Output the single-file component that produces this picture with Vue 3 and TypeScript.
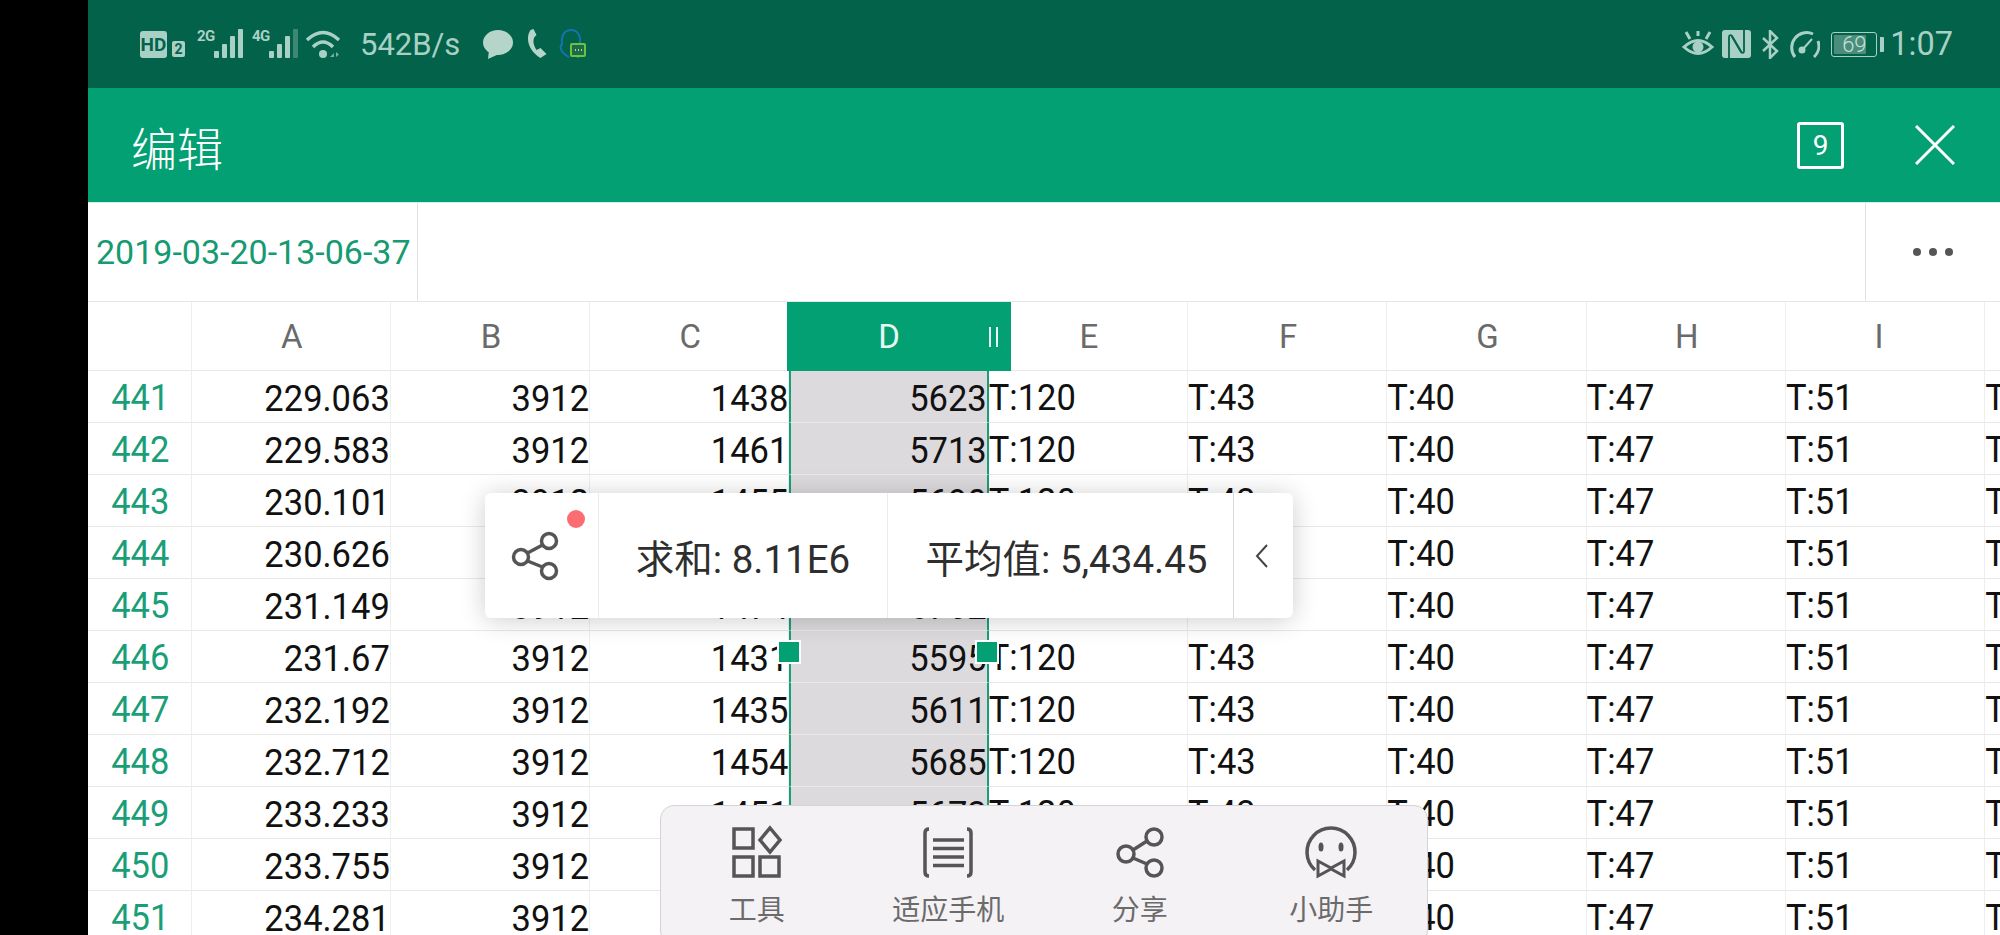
<script setup lang="ts">
interface Row { n: number; a: string; c: string; d: string }
const rows: Row[] = [
  { n: 441, a: '229.063', c: '1438', d: '5623' },
  { n: 442, a: '229.583', c: '1461', d: '5713' },
  { n: 443, a: '230.101', c: '1455', d: '5690' },
  { n: 444, a: '230.626', c: '1462', d: '5717' },
  { n: 445, a: '231.149', c: '1474', d: '5762' },
  { n: 446, a: '231.67', c: '1431', d: '5595' },
  { n: 447, a: '232.192', c: '1435', d: '5611' },
  { n: 448, a: '232.712', c: '1454', d: '5685' },
  { n: 449, a: '233.233', c: '1451', d: '5673' },
  { n: 450, a: '233.755', c: '1449', d: '5665' },
  { n: 451, a: '234.281', c: '1452', d: '5677' }
]
const heads: string[] = ['A', 'B', 'C', 'D', 'E', 'F', 'G', 'H', 'I', '']
const tail: string[] = ['T:120', 'T:43', 'T:40', 'T:47', 'T:51', 'T']
</script>

<template>
  <div class="screen">
    <div class="side"></div>
    <div class="main">
      <header class="status">
        <div class="st-left">
          <div class="hd">HD</div>
          <div class="sim">2</div>
          <div class="sig">
            <span class="sig-t">2G</span>
            <svg width="32" height="30" viewBox="0 0 32 30" fill="#a9d0c4"><rect x="1" y="22" width="5" height="7" rx="1"/><rect x="9" y="15" width="5" height="14" rx="1"/><rect x="17" y="7" width="5" height="22" rx="1"/><rect x="25" y="0" width="5" height="29" rx="1"/></svg>
          </div>
          <div class="sig sig2">
            <span class="sig-t">4G</span>
            <svg width="32" height="30" viewBox="0 0 32 30" fill="#a9d0c4"><rect x="1" y="22" width="5" height="7" rx="1"/><rect x="9" y="15" width="5" height="14" rx="1"/><rect x="17" y="7" width="5" height="22" rx="1"/><rect x="25" y="0" width="5" height="29" rx="1" opacity=".35"/></svg>
          </div>
          <svg class="wifi" width="36" height="28" viewBox="0 0 36 28" fill="none" stroke="#a9d0c4" stroke-width="3.500"><path d="M1 10Q17-5 33 10"/><path d="M7 17Q17 7 27 17"/><circle cx="17" cy="24" r="4" fill="#a9d0c4" stroke="none"/><path d="M24 27l4-4v4zM30 22l3 2.500-3 2.500z" fill="#a9d0c4" stroke="none" opacity=".7"/></svg>
          <span class="speed">542B/s</span>
          <svg class="bubble" width="30" height="29" viewBox="0 0 30 29" fill="#b5d5cb"><ellipse cx="15" cy="12.500" rx="15" ry="12.500"/><path d="M6 20L5 29L16 24z"/></svg>
          <svg class="phone" width="23" height="30" viewBox="0 0 22 30" fill="#b5d5cb"><path d="M5 1C0 8 2 21 15 29L21 25L15 19L11 21C8 16 7 12 9 8L11 6L8 0z"/></svg>
          <svg class="qq" width="28" height="30" viewBox="0 0 28 30" fill="none"><path d="M11 28C3 24 1 18 4 15C3 6 7 1 13 1C19 1 23 6 22 14" stroke="#1474b0" stroke-width="2"/><rect x="13" y="15" width="14" height="12" rx="1" stroke="#6cc242" stroke-width="2" fill="#1d6a48"/><path d="M17 21h1M20 21h1M23 21h1" stroke="#a9e08a" stroke-width="2"/><path d="M18 27l2 2 2-2" fill="#6cc242"/></svg>
        </div>
        <div class="st-right">
          <svg class="eye" width="32" height="26" viewBox="0 0 32 26" fill="none" stroke="#a9d0c4" stroke-width="3"><path d="M2 16Q16 3 30 16Q16 29 2 16z"/><circle cx="16" cy="16" r="5.500" fill="#a9d0c4" stroke="none"/><path d="M4 1l4 7M28 1l-4 7M16 0v5"/></svg>
          <svg class="nfc" width="29" height="28" viewBox="0 0 29 28"><rect width="29" height="28" rx="3" fill="#a9d0c4"/><path d="M7 28V7Q7 4 10 6L20 23M22 0V21Q22 24 19 22L9 5" fill="none" stroke="#03624a" stroke-width="1.800"/></svg>
          <svg class="bt" width="18" height="29" viewBox="0 0 18 29" fill="none" stroke="#a9d0c4" stroke-width="2.500"><path d="M2 8L16 21L9 28V1L16 8L2 21"/></svg>
          <svg class="gauge" width="32" height="28" viewBox="0 0 32 28" fill="none" stroke="#a9d0c4" stroke-width="3"><path d="M7 27A15 15 0 0 1 25 4"/><path d="M30 11A15 15 0 0 1 26 27"/><path d="M15 19L24 9" stroke-width="2"/><circle cx="14" cy="20" r="3.500" fill="#a9d0c4" stroke="none"/></svg>
          <div class="batt"><div class="batt-fill"></div><span class="batt-t">69</span></div>
          <div class="nub"></div>
          <span class="time">1:07</span>
        </div>
      </header>

      <div class="toolbar">
        <span class="title">编辑</span>
        <div class="count">9</div>
        <svg class="close" width="40" height="40" viewBox="0 0 40 40" stroke="#fff" stroke-width="3"><path d="M1 1L39 39M39 1L1 39"/></svg>
      </div>

      <div class="formula">
        <div class="name">2019-03-20-13-06-37</div>
        <div class="fx"></div>
        <div class="more"><i></i><i></i><i></i></div>
      </div>

      <div class="sheet">
        <div class="grid">
          <div class="h corner"></div>
          <div v-for="(h, i) in heads" :key="'h' + i" class="h" :class="{ hsel: h === 'D', hi: h === 'I' }">
            {{ h }}
            <div v-if="h === 'D'" class="h-ext">
              <span class="grip"></span>
            </div>
          </div>
          <template v-for="r in rows" :key="r.n">
            <div class="c rn"><span class="t">{{ r.n }}</span></div>
            <div class="c num"><span class="t">{{ r.a }}</span></div>
            <div class="c num"><span class="t">3912</span></div>
            <div class="c num"><span class="t">{{ r.c }}</span></div>
            <div class="c num sel"><span class="t">{{ r.d }}</span></div>
            <div v-for="(t, j) in tail" :key="j" class="c txt"><span class="t">{{ t }}</span></div>
          </template>
        </div>
        <div class="handle hl"></div>
        <div class="handle hr"></div>
      </div>
    </div>

    <div class="popup">
      <div class="pop-share">
        <svg width="50" height="50" viewBox="0 0 50 50" fill="none" stroke="#555" stroke-width="3.500"><circle cx="38" cy="10" r="7.500"/><circle cx="10" cy="26" r="7.500"/><circle cx="38" cy="40" r="7.500"/><path d="M16.500 22L31.500 14M16.500 30L31.500 36"/></svg>
        <span class="dot"></span>
      </div>
      <div class="pop-a">求和: 8.11E6</div>
      <div class="pop-b">平均值: 5,434.45</div>
      <div class="pop-c">
        <svg width="14" height="24" viewBox="0 0 14 24" fill="none" stroke="#444" stroke-width="2"><path d="M12 1L2 12L12 23"/></svg>
      </div>
    </div>

    <div class="panel">
      <div class="item">
        <svg width="56" height="56" viewBox="0 0 56 56" fill="none" stroke="#555" stroke-width="3.500"><rect x="5" y="4" width="19" height="19"/><path d="M41 3L51 15L41 27L31 15z"/><rect x="5" y="32" width="19" height="19"/><rect x="31" y="32" width="19" height="19"/></svg>
        <span>工具</span>
      </div>
      <div class="item">
        <svg width="56" height="56" viewBox="0 0 56 56" fill="none" stroke="#555" stroke-width="3.500"><path d="M9 4Q5 4 5 8V47Q5 51 9 51M47 4Q51 4 51 8V47Q51 51 47 51"/><path d="M13 15H44M13 23.500H44M13 32H44M13 40.500H44"/></svg>
        <span>适应手机</span>
      </div>
      <div class="item">
        <svg width="56" height="56" viewBox="0 0 56 56" fill="none" stroke="#555" stroke-width="3.500"><circle cx="42" cy="12" r="8"/><circle cx="14" cy="29" r="8"/><circle cx="42" cy="43" r="8"/><path d="M21 25L35 16M21 33L35 39"/></svg>
        <span>分享</span>
      </div>
      <div class="item">
        <svg width="56" height="56" viewBox="0 0 56 56" fill="none" stroke="#555" stroke-width="3.500"><path d="M12 45A24 24 0 1 1 44 45"/><path d="M15 36L28 43L41 36V51L28 44L15 51z" stroke-width="3"/><ellipse cx="18" cy="22" rx="2.500" ry="4.500" fill="#555" stroke="none"/><ellipse cx="38" cy="22" rx="2.500" ry="4.500" fill="#555" stroke="none"/></svg>
        <span>小助手</span>
      </div>
    </div>
  </div>
</template>

<style scoped>
.screen {
  position: relative;
  display: flex;
  width: 2000px;
  height: 935px;
  overflow: hidden;
  background: #fff;
  font-family: Roboto, "Noto Sans CJK SC", sans-serif;
}
.side { width: 88px; flex: none; background: #000; }
.main { flex: 1; min-width: 0; display: flex; flex-direction: column; }

.status {
  height: 88px;
  flex: none;
  background: #03624a;
  display: flex;
  align-items: center;
  justify-content: space-between;
  padding: 0 47px 0 52px;
  color: #a9d0c4;
}
.st-left, .st-right { display: flex; align-items: center; }
.hd {
  width: 27px; height: 27px; border-radius: 3px; background: #a9d0c4; color: #03624a;
  font-size: 19px; font-weight: 700; display: flex; align-items: center; justify-content: center;
}
.sim {
  width: 13px; height: 16px; margin: 9px 0 0 5px; border-radius: 2px; background: #a9d0c4; color: #03624a;
  font-size: 14px; font-weight: 700; display: flex; align-items: center; justify-content: center;
}
.sig { display: flex; align-items: flex-end; margin-left: 12px; height: 30px; }
.sig2 { margin-left: 7px; }
.sig-t { font-size: 15px; font-weight: 700; line-height: 14px; align-self: flex-start; width: 16px; letter-spacing: -.5px; }
.wifi { margin-left: 6px; }
.speed { margin-left: 18px; font-size: 31px; width: 99px; white-space: nowrap; color: #a9d0c4; }
.bubble { margin-left: 24px; }
.phone { margin-left: 12px; }
.qq { margin-left: 10px; }
.eye { margin-right: 8px; }
.nfc { margin-right: 10px; }
.bt { margin-right: 9px; }
.gauge { margin-right: 11px; }
.batt {
  position: relative; width: 46px; height: 25px; border: 1.500px solid #a9d0c4; border-radius: 3px;
  box-sizing: border-box; display: flex; align-items: center; justify-content: center; overflow: hidden;
}
.batt-fill { position: absolute; left: 2px; top: 2px; bottom: 2px; width: 32px; background: #4b8d7b; border-radius: 1px; }
.batt-t { position: relative; font-size: 22px; font-weight: 300; color: #c5e0d8; }
.nub { width: 4px; height: 15px; margin: 0 6px 0 3px; background: #a9d0c4; border-radius: 0 1px 1px 0; }
.time { font-size: 32.500px; color: #a9d0c4; white-space: nowrap; }

.toolbar {
  height: 114px; flex: none; background: #03a073; display: flex; align-items: center; padding: 0 45px 0 43px;
}
.title { font-size: 46px; color: #fff; flex: 1; font-weight: 300; padding-top: 2px; }
.count {
  width: 47px; height: 47px; box-sizing: border-box; border: 3px solid #fff; border-radius: 3px; color: #fff;
  font-size: 28px; display: flex; align-items: center; justify-content: center; margin-right: 71px;
}

.formula { height: 100px; flex: none; display: flex; border-bottom: 1px solid #e6e6e6; box-sizing: border-box; border-top: 1px solid #d6efe6; }
.name {
  width: 330px; box-sizing: border-box; border-right: 1px solid #e2e2e2; color: #159a72; font-size: 34px;
  display: flex; align-items: center; padding-left: 8px; white-space: nowrap;
}
.fx { flex: 1; border-right: 1px solid #e2e2e2; }
.more { width: 134px; display: flex; align-items: center; justify-content: center; gap: 8px; }
.more i { width: 8px; height: 8px; border-radius: 50%; background: #555; }

.sheet { position: relative; flex: 1; min-height: 0; overflow: hidden; }
.grid {
  display: grid;
  grid-template-columns: 103.500px repeat(10, 199.300px);
  grid-template-rows: 69px;
  grid-auto-rows: 52px;
}
.h {
  position: relative; display: flex; align-items: center; justify-content: center; box-sizing: border-box;
  border-bottom: 1px solid #e8e8e8; border-right: 1px solid #eee; font-size: 33px; color: #6a6a6a; padding-left: 2px;
}
.hi { padding: 0 12px 0 0; }
.hsel { background: #03a073; color: #e8f7f2; border: 0; z-index: 2; margin-left: -2px; }
.h-ext { position: absolute; left: 100%; top: 0; bottom: 0; width: 22px; background: #03a073; display: flex; align-items: center; }
.grip { width: 2.500px; height: 20px; border-left: 2.500px solid #e8f7f2; border-right: 2.500px solid #e8f7f2; padding: 0 1.500px; }
.c {
  display: flex; align-items: center; box-sizing: border-box; border-bottom: 1px solid #e8e8e8; border-right: 1px solid #eee;
  font-size: 34.500px; color: #111; white-space: nowrap; overflow: hidden; padding-top: 3px;
}
.t { display: inline-block; transform: scaleY(1.08); }
.rn { justify-content: center; color: #1a9e78; padding-left: 2px; padding-top: 1px; }
.num { justify-content: flex-end; padding-right: 0; }
.txt { padding-left: 0; padding-top: 0; }
.sel { background: #dcdadd; border-left: 2px solid #1a9e78; border-right: 2px solid #1a9e78; padding-right: 0; }

.handle { position: absolute; top: 338px; width: 24px; height: 24px; box-sizing: border-box; background: #03a073; border: 2px solid #fff; z-index: 3; }
.hl { left: 689px; }
.hr { left: 887px; }

.popup {
  position: absolute; left: 485px; top: 493px; width: 808px; height: 125px; background: #fff; border-radius: 6px;
  box-shadow: 0 2px 26px rgba(0, 0, 0, .2); display: flex; z-index: 5; color: #2e2e2e; font-size: 38.500px;
}
.popup > div { box-sizing: border-box; display: flex; align-items: center; justify-content: center; height: 100%; white-space: nowrap; }
.pop-share { position: relative; width: 114px; border-right: 1px solid #ececec; padding-right: 12px; }
.dot { position: absolute; left: 82px; top: 17px; width: 18px; height: 18px; border-radius: 50%; background: #fc6d72; }
.pop-a { width: 289px; border-right: 1px solid #ececec; }
.pop-b { width: 346px; border-right: 1px solid #d8d8d8; padding-left: 12px; }
.pop-c { flex: 1; padding-right: 4px; }

.panel {
  position: absolute; left: 660px; top: 805px; width: 768px; height: 140px; box-sizing: border-box; background: #f5f2f6;
  border: 1px solid #d4d2d6; border-radius: 14px; display: flex; z-index: 4; padding-top: 19px;
}
.item { flex: 1; display: flex; flex-direction: column; align-items: center; color: #6b6b6b; font-size: 28px; }
.item span { line-height: 36px; margin-top: 12px; }
</style>

<style>
html, body { margin: 0; background: #000; }
</style>
